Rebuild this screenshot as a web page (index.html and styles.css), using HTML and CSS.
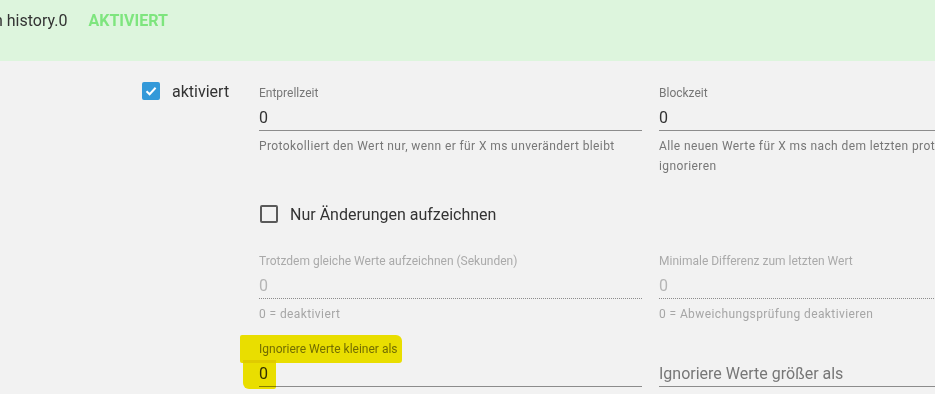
FILE: index.html
```html
<!DOCTYPE html>
<html>

<head>
  <title>history.0 Einstellungen</title>
  <link rel="stylesheet" href="styles.css">
</head>

<body>
  <div class="header">
    <span class="instance">n history.0</span>
    <span class="status">AKTIVIERT</span>
  </div>

  <main class="content">
    <div class="enable">
      <span class="checkbox checked">
        <svg width="14" height="14" viewBox="0 0 14 14">
          <path d="M2.5 7.2 L5.6 10.2 L11.6 3.8" fill="none" stroke="#fff" stroke-width="2" />
        </svg>
      </span>
      <span class="enable-label">aktiviert</span>
    </div>

    <div class="form">
      <div class="row">
        <div class="field">
          <label>Entprellzeit</label>
          <div class="value">0</div>
          <p class="helper">Protokolliert den Wert nur, wenn er für X ms unverändert bleibt</p>
        </div>
        <div class="field">
          <label>Blockzeit</label>
          <div class="value">0</div>
          <p class="helper">Alle neuen Werte für X ms nach dem letzten protokollierten Wert ignorieren</p>
        </div>
      </div>

      <div class="check-row">
        <span class="checkbox"></span>
        <span class="check-label">Nur Änderungen aufzeichnen</span>
      </div>

      <div class="row disabled">
        <div class="field">
          <label>Trotzdem gleiche Werte aufzeichnen (Sekunden)</label>
          <div class="value">0</div>
          <p class="helper">0 = deaktiviert</p>
        </div>
        <div class="field">
          <label>Minimale Differenz zum letzten Wert</label>
          <div class="value">0</div>
          <p class="helper">0 = Abweichungsprüfung deaktivieren</p>
        </div>
      </div>

      <div class="row last">
        <div class="field">
          <label><span class="marker marker-label">Ignoriere Werte kleiner als</span></label>
          <div class="value"><span class="marker marker-value">0</span></div>
        </div>
        <div class="field">
          <label>&nbsp;</label>
          <div class="value placeholder">Ignoriere Werte größer als</div>
        </div>
      </div>
    </div>
  </main>
</body>

</html>
```

FILE: styles.css
```css
html,
body {
  margin: 0;
  padding: 0;
  height: 100%;
}

body {
  font-family: Roboto, "Noto Sans", sans-serif;
  background-color: #f2f2f2;
  color: #333;
  overflow: hidden;
}

/* Top band */
.header {
  height: 61px;
  box-sizing: border-box;
  padding-top: 11px;
  background-color: #ddf5dd;
  display: flex;
  gap: 21px;
  font-size: 16px;
  line-height: 20px;
  white-space: nowrap;
}

.instance {
  margin-left: -6px;
  color: #333;
}

.status {
  font-weight: bold;
  color: #7ee57e;
}

/* Main area */
.content {
  display: flex;
  padding-top: 21px;
  padding-left: 142px;
}

.enable {
  width: 117px;
  flex-shrink: 0;
  display: flex;
  align-items: center;
  gap: 12px;
  height: 18px;
}

.enable-label {
  font-size: 16px;
  color: #333;
}

.checkbox {
  width: 18px;
  height: 18px;
  box-sizing: border-box;
  border: 2px solid #5a5a5a;
  border-radius: 2px;
  display: flex;
  align-items: center;
  justify-content: center;
  flex-shrink: 0;
}

.checkbox.checked {
  background-color: #3399d9;
  border-color: #3399d9;
}

.form {
  padding-top: 4px;
  flex-shrink: 0;
}

.row {
  display: grid;
  grid-template-columns: 383px 383px;
  column-gap: 17px;
}

.field label {
  display: block;
  font-size: 12px;
  line-height: 14px;
  color: #777;
}

.field .value {
  margin-top: 6px;
  font-size: 16px;
  line-height: 24px;
  color: #333;
  border-bottom: 1px solid #8c8c8c;
}

.helper {
  margin: 5px 0 0;
  font-size: 12px;
  line-height: 20px;
  color: #777;
  letter-spacing: 0.4px;
}

.check-row {
  display: flex;
  align-items: center;
  gap: 12px;
  height: 18px;
  margin-top: 29px;
  padding-left: 1px;
}

.check-label {
  font-size: 16px;
  color: #333;
}

.row.disabled {
  margin-top: 31px;
}

.row.disabled label {
  color: #aaa;
}

.row.disabled .value {
  color: #b5b5b5;
  border-bottom: 1px dotted #8c8c8c;
}

.row.disabled .helper {
  color: #a6a6a6;
}

.row.last {
  margin-top: 18px;
}

.placeholder {
  color: #777 !important;
}

/* Yellow marker over the last field */
.marker {
  position: relative;
}

.marker::before {
  content: "";
  position: absolute;
  background-color: #f6ea00;
  mix-blend-mode: multiply;
}

.marker-label::before {
  left: -19px;
  right: -4px;
  top: -7px;
  bottom: -7px;
  border-radius: 2px 6px 3px 2px;
}

.marker-value::before {
  left: -16px;
  width: 33px;
  top: -4px;
  bottom: -6px;
  border-radius: 0 0 2px 6px;
}
```
